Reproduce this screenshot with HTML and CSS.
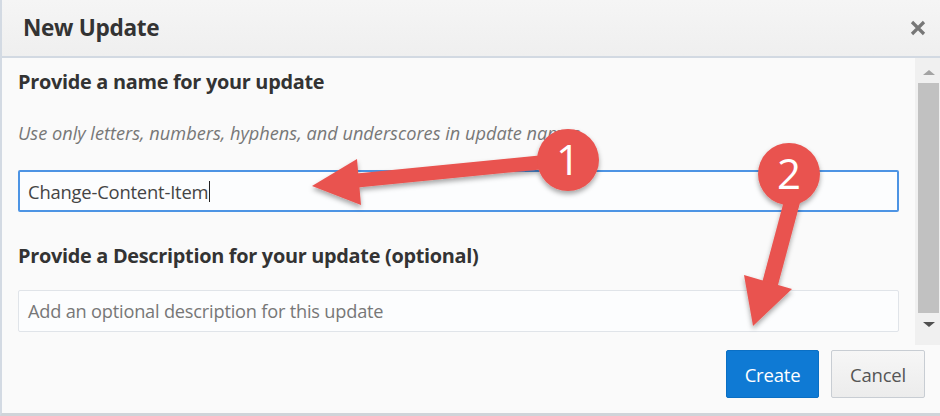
FILE: index.html
```html
<!DOCTYPE html>
<html lang="en">
<head>
<meta charset="utf-8">
<title>New Update</title>
<link rel="stylesheet" href="styles.css">
</head>
<body>
<div class="dialog">
  <header class="dlg-header">
    <h1 class="dlg-title">New Update</h1>
    <span class="dlg-close" aria-label="Close">
      <svg width="16" height="16" viewBox="0 0 16 16"><path d="M2 2 L14 14 M14 2 L2 14" stroke="#777" stroke-width="3.2"/></svg>
    </span>
  </header>
  <div class="dlg-body">
    <div class="dlg-content">
      <h2 class="field-label">Provide a name for your update</h2>
      <p class="field-hint">Use only letters, numbers, hyphens, and underscores in update names.</p>
      <div class="text-field focused">Change-Content-Item<span class="caret"></span></div>
      <h2 class="field-label second">Provide a Description for your update (optional)</h2>
      <div class="text-field placeholder">Add an optional description for this update</div>
    </div>
    <div class="scrollbar">
      <span class="sb-arrow up"></span>
      <span class="sb-thumb"></span>
      <span class="sb-arrow down"></span>
    </div>
  </div>
  <footer class="dlg-footer">
    <button class="btn btn-primary">Create</button>
    <button class="btn btn-secondary">Cancel</button>
  </footer>
  <svg class="annotations" width="940" height="416" viewBox="0 0 940 416">
    <defs>
      <filter id="sh" x="-20%" y="-20%" width="140%" height="140%">
        <feDropShadow dx="0" dy="3" stdDeviation="2.5" flood-color="#000" flood-opacity="0.35"/>
      </filter>
    </defs>
    <g filter="url(#sh)" fill="#e9534f">
      <line x1="545" y1="162" x2="352" y2="181" stroke="#e9534f" stroke-width="14"/>
      <polygon points="312,186 357,159 361,205"/>
      <line x1="793" y1="198" x2="770" y2="284" stroke="#e9534f" stroke-width="16"/>
      <polygon points="744,275 792,289 753,326"/>
      <circle cx="568" cy="160" r="31"/>
      <circle cx="789" cy="174" r="31"/>
    </g>
    <text class="badge-num" x="568" y="175" text-anchor="middle">1</text>
    <text class="badge-num" x="789" y="189" text-anchor="middle">2</text>
  </svg>
</div>
</body>
</html>
```

FILE: styles.css
```css
* { box-sizing: border-box; }
html, body { margin: 0; padding: 0; background: #fafafa; }
body { font-family: "Open Sans", "Noto Sans", sans-serif; color: #333; }

.dialog {
  position: relative;
  width: 940px;
  height: 416px;
  display: flex;
  flex-direction: column;
  background: #fafafa;
  border-left: 2px solid #d3dae3;
  border-bottom: 3px solid #d0d4d9;
  overflow: hidden;
}

.dlg-header {
  height: 58px;
  flex: none;
  display: flex;
  align-items: center;
  justify-content: space-between;
  padding: 0 14px 0 21px;
  background: linear-gradient(#f5f5f5, #efefef);
  border-bottom: 2px solid #d2d9e2;
}
.dlg-title {
  margin: 0;
  font-size: 22.6px;
  line-height: 28px;
  font-weight: 700;
  color: #333;
  letter-spacing: -0.3px;
}
.dlg-close { display: flex; width: 16px; height: 16px; margin-top: 0; }

.dlg-body {
  flex: 1;
  display: flex;
  min-height: 0;
}
.dlg-content {
  flex: 1;
  padding: 13px 16px 0 16px;
}
.field-label {
  margin: 0;
  font-size: 19.9px;
  line-height: 22px;
  font-weight: 700;
  color: #333;
  letter-spacing: -0.3px;
}
.field-label.second { margin-top: 33px; }
.field-hint {
  margin: 29px 0 0;
  font-size: 18.2px;
  line-height: 22px;
  font-style: italic;
  color: #777;
  white-space: nowrap;
}
.text-field {
  height: 42px;
  margin-top: 26px;
  display: flex;
  align-items: center;
  padding: 0 9px;
  font-size: 18.4px;
  background: #fcfdfe;
  border: 1px solid #e0e4e9;
  border-radius: 2px;
  color: #444;
  letter-spacing: -0.2px;
}
.text-field.focused {
  border: 2px solid #4d94e4;
  padding: 0 8px;
}
.text-field.placeholder { margin-top: 23px; color: #777; font-size: 18.2px; }
.caret {
  display: inline-block;
  width: 1px;
  height: 21px;
  background: #222;
  margin-left: 1px;
}

.scrollbar {
  width: 25px;
  flex: none;
  background: #f0f0f0;
  display: flex;
  flex-direction: column;
  align-items: center;
  padding: 0 0 0 2px;
}
.sb-arrow {
  width: 0; height: 0;
  border-left: 6px solid transparent;
  border-right: 6px solid transparent;
}
.sb-arrow.up { border-bottom: 5px solid #a3a3a3; margin: 12px 0 8px; }
.sb-arrow.down { border-top: 5px solid #505050; margin: 9px 0 0; }
.sb-thumb {
  width: 21px;
  height: 230px;
  background: #c1c1c1;
}

.dlg-footer {
  flex: none;
  height: 68px;
  display: flex;
  justify-content: flex-end;
  align-items: flex-start;
  gap: 12px;
  padding: 5px 15px 0 0;
}
.btn {
  height: 48px;
  font-family: "Open Sans", "Noto Sans", sans-serif;
  font-size: 18.5px;
  border-radius: 2px;
  padding: 0;
  letter-spacing: -0.2px;
}
.btn-primary {
  width: 93px;
  background: #0f7ad4;
  border: 1px solid #0a6fc4;
  color: #fff;
}
.btn-secondary {
  width: 94px;
  background: linear-gradient(#f6f6f6, #ececec);
  border: 1px solid #c8cdd3;
  color: #555;
}

.annotations {
  position: absolute;
  left: -2px;
  top: 0;
  pointer-events: none;
}
.badge-num {
  font-family: "Open Sans", "Noto Sans", sans-serif;
  font-size: 42px;
  fill: #fff;
}
```
